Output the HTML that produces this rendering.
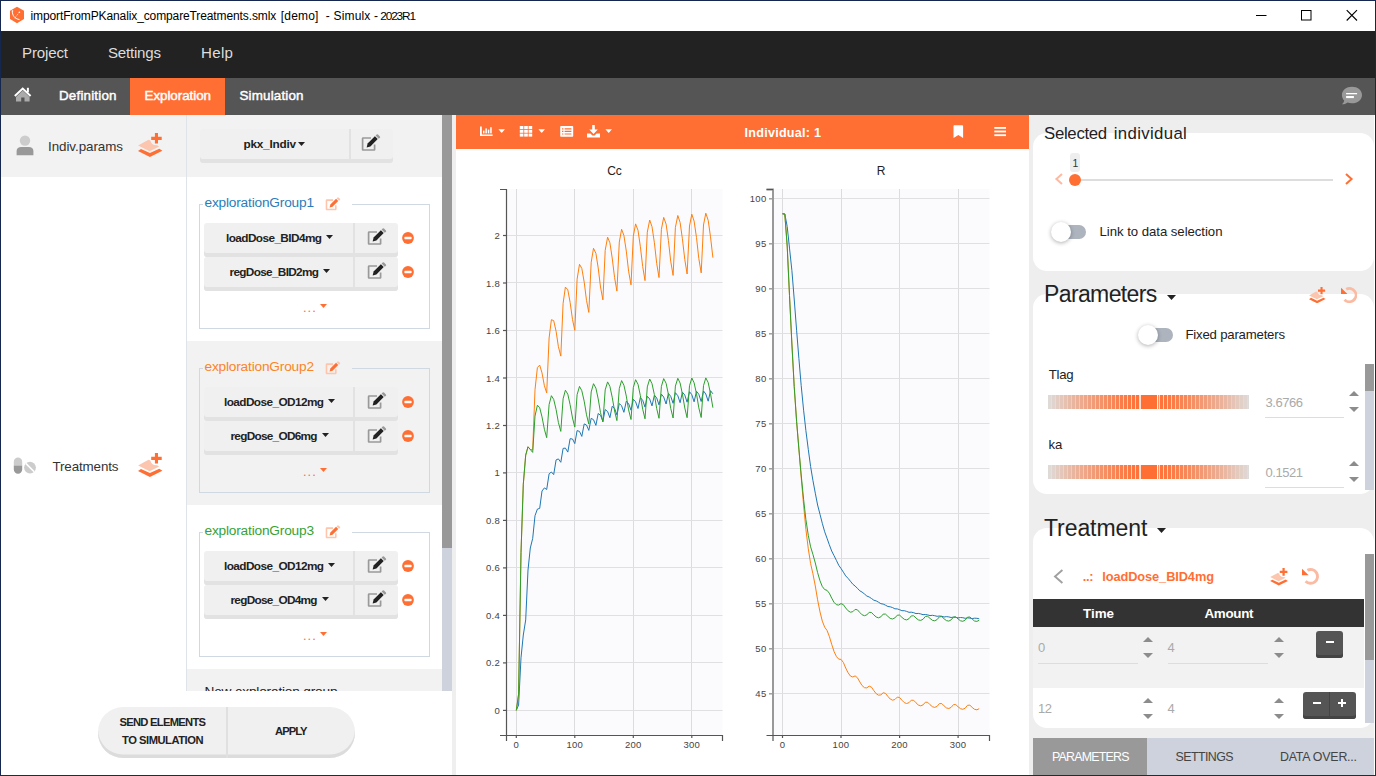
<!DOCTYPE html>
<html lang="en"><head><meta charset="utf-8"><title>Simulx</title>
<style>
html,body{margin:0;padding:0;background:#fff}
body{width:1376px;height:776px;overflow:hidden;position:relative;font-family:"Liberation Sans", sans-serif}
.a{position:absolute;display:block}
.t{position:absolute;white-space:nowrap;line-height:1;display:block}
.pb{display:inline-block;width:0;height:0}
.btn{background:#f0f0f0;border-radius:3px;box-shadow:inset 0 -4px 0 #e2e2e2}
.btn i{position:absolute;top:0;bottom:0;width:2px;background:#e2e2e2}
.pill{background:#f0f0f0;border-radius:25px;box-shadow:inset 0 -3.5px 0 #dcdcdc}
.pill i{position:absolute;top:0;bottom:0;width:2px;background:#e0e0e0}
  .fs{border:1px solid #d0d8e2;box-sizing:border-box}
.card{background:#fff;border-radius:14px}
.dbtn{background:#555;border-radius:3px;box-shadow:inset 0 -3px 0 #444}
.dbtn i{position:absolute;left:26px;top:0;bottom:0;width:1px;background:#444}
</style></head>
<body>
<div class="a" style="left:0px;top:0px;width:1376px;height:776px;background:#fff;"></div>
<div class="a" style="left:1px;top:1px;width:1374px;height:30px;background:#fff;"></div>
<svg class="a" style="left:9px;top:6px" width="16" height="18" viewBox="0 0 16 18">
<path d="M8 0.8 L15 4.8 V13 L8 17.2 L1 13 V4.8 Z" fill="#ff6f33"/>
<path d="M3.2 5.2 C3.6 9.5 5.2 12.6 10.6 13.6" fill="none" stroke="#fff" stroke-width="1"/>
<path d="M5.6 12.2 L10.2 6.4" fill="none" stroke="#fff" stroke-width="0.8" stroke-dasharray="1.2 1"/>
<circle cx="10.4" cy="6.2" r="0.8" fill="#fff"/><path d="M2.6 4.6 L4.2 4.2 L4 7 Z" fill="#fff"/>
</svg>
<span class="t" id="t0" style="left:30.5px;top:10.01px;font-size:12px;font-weight:400;color:#000;letter-spacing:-0.115px;">importFromPKanalix_compareTreatments.smlx</span>
<span class="t" id="t1" style="left:280.8px;top:10.01px;font-size:12px;font-weight:400;color:#000;letter-spacing:0.182px;">[demo]</span>
<span class="t" id="t2" style="left:325.8px;top:10.01px;font-size:12px;font-weight:400;color:#000;letter-spacing:0.170px;white-space:pre;">- Simulx -</span>
<span class="t" id="t3" style="left:380.3px;top:11.01px;font-size:11.8px;font-weight:400;color:#000;letter-spacing:-1.126px;">2023R1</span>
<svg class="a" style="left:1250px;top:5px" width="116" height="22" viewBox="0 0 116 22"><path d="M6 10.5 H16.5" stroke="#000" stroke-width="1"/><rect x="51.5" y="5.5" width="9.5" height="9.5" fill="none" stroke="#000" stroke-width="1"/><path d="M96.7 5.2 L107 15.5 M107 5.2 L96.7 15.5" stroke="#000" stroke-width="1.1"/></svg>
<div class="a" style="left:1px;top:31px;width:1374px;height:47px;background:#222;"></div>
<span class="t" id="t4" style="left:22px;top:45.00px;font-size:15.1px;font-weight:400;color:#ddd;letter-spacing:-0.164px;">Project</span>
<span class="t" id="t5" style="left:108px;top:45.00px;font-size:15.1px;font-weight:400;color:#ddd;letter-spacing:-0.221px;">Settings</span>
<span class="t" id="t6" style="left:201px;top:45.00px;font-size:15.1px;font-weight:400;color:#ddd;letter-spacing:0.318px;">Help</span>
<div class="a" style="left:1px;top:78px;width:1374px;height:37px;background:#555;"></div>
<div class="a" style="left:130px;top:78px;width:95px;height:37px;background:#ff6f33;"></div>
<svg class="a" style="left:14px;top:87px" width="18" height="16" viewBox="0 0 18 16">
<path d="M8.7 3.6 L15.6 9.9 V14.6 H10.5 V10.4 H7.2 V14.6 H2 V9.9 Z" fill="#aaa"/>
<rect x="12.9" y="0.8" width="2" height="4.6" fill="#fff"/>
<path d="M0.8 8.9 L8.7 1.6 L16.6 8.9" fill="none" stroke="#fff" stroke-width="2" stroke-linejoin="miter"/></svg>
<span class="t" id="t7" style="left:59px;top:89.00px;font-size:13.4px;font-weight:400;color:#fff;letter-spacing:0.186px;-webkit-text-stroke:0.45px #fff;">Definition</span>
<span class="t" id="t8" style="left:144.5px;top:89.00px;font-size:13.4px;font-weight:400;color:#fff;letter-spacing:-0.050px;-webkit-text-stroke:0.45px #fff;">Exploration</span>
<span class="t" id="t9" style="left:239.5px;top:89.00px;font-size:13.4px;font-weight:400;color:#fff;letter-spacing:0.163px;-webkit-text-stroke:0.45px #fff;">Simulation</span>
<svg class="a" style="left:1340px;top:86px" width="24" height="20" viewBox="0 0 24 20">
<path d="M12 0.8 C17.6 0.8 22 4.3 22 8.9 C22 13.6 17.6 17.2 12 17.2 C10.4 17.2 8.8 16.9 7.5 16.4 C6 17.6 4 18.3 2 18.3 C3.3 17.3 4 15.8 4.2 14.6 C2.8 13.1 1.9 11.1 1.9 8.9 C1.9 4.3 6.4 0.8 12 0.8 Z" fill="#999"/>
<rect x="6.1" y="7" width="11" height="1.3" fill="#fff"/><rect x="6.1" y="10" width="7.8" height="2.1" fill="#fff"/></svg>
<div class="a" style="left:1px;top:115px;width:441px;height:62px;background:#f2f2f2;"></div>
<div class="a" style="left:186px;top:115px;width:1px;height:576px;background:#dfe3ea;"></div>
<div class="a" style="left:187px;top:341px;width:255px;height:164px;background:#f2f2f2;"></div>
<div class="a" style="left:187px;top:669px;width:255px;height:22px;background:#f2f2f2;"></div>
<div class="a" style="left:442px;top:115px;width:10px;height:576px;background:#cdd2dc;"></div>
<div class="a" style="left:442px;top:115px;width:10px;height:433px;background:#999;"></div>
<div class="a" style="left:452px;top:115px;width:4px;height:660px;background:#efefef;"></div>
<svg class="a" style="left:16px;top:135px" width="18" height="21" viewBox="0 0 18 21"><circle cx="9" cy="5.6" r="5.2" fill="#ccc"/><path d="M0.6 20.2 V16 C0.6 13.4 2.6 12 5 12 H13 C15.4 12 17.4 13.4 17.4 16 V20.2 Z" fill="#999"/></svg>
<span class="t" id="t10" style="left:48px;top:139.80px;font-size:13.4px;font-weight:400;color:#333;letter-spacing:-0.061px;">Indiv.params</span>
<svg class="a" style="left:138px;top:133px" width="25" height="24" viewBox="0 0 25 24">
<path d="M0.1 12.5 L10.5 6.7 L12.4 7.5 C12.8 10.6 15.6 12.6 19 12.2 L21.2 13.5 L11.6 18.2 Z" fill="#fbc5ae"/>
<path d="M0 17.9 L3 16 L11.9 20.1 L21.3 15.8 L24.4 17.7 L11.9 24 Z" fill="#ff6f33"/>
<path d="M16.9 0.1 H20 V3.8 H23.7 V6.9 H20 V10.6 H16.9 V6.9 H13.2 V3.8 H16.9 Z" fill="#ff6f33"/>
</svg>
<svg class="a" style="left:13px;top:457px" width="24" height="18" viewBox="0 0 24 18">
<path d="M0.8 8.6 V4.8 A4.2 4.2 0 0 1 9.2 4.8 V8.6 Z" fill="#ccc"/><path d="M0.8 8.6 V12.6 A4.2 4.2 0 0 0 9.2 12.6 V8.6 Z" fill="#999"/>
<circle cx="17" cy="10.6" r="5.9" fill="#ccc"/><path d="M12.8 6.4 L21.2 14.8" stroke="#fff" stroke-width="1.6"/></svg>
<span class="t" id="t11" style="left:52.5px;top:459.80px;font-size:13.4px;font-weight:400;color:#333;letter-spacing:-0.137px;">Treatments</span>
<svg class="a" style="left:138px;top:453px" width="25" height="24" viewBox="0 0 25 24">
<path d="M0.1 12.5 L10.5 6.7 L12.4 7.5 C12.8 10.6 15.6 12.6 19 12.2 L21.2 13.5 L11.6 18.2 Z" fill="#fbc5ae"/>
<path d="M0 17.9 L3 16 L11.9 20.1 L21.3 15.8 L24.4 17.7 L11.9 24 Z" fill="#ff6f33"/>
<path d="M16.9 0.1 H20 V3.8 H23.7 V6.9 H20 V10.6 H16.9 V6.9 H13.2 V3.8 H16.9 Z" fill="#ff6f33"/>
</svg>
<div class="a btn" style="left:199.5px;top:129px;width:193px;height:34px"><i style="left:149.5px"></i></div>
<span class="t" id="t12" style="left:243.5px;top:139.01px;font-size:11.8px;font-weight:700;color:#222;letter-spacing:-0.240px;">pkx_Indiv</span>
<svg class="a" style="left:298px;top:142px" width="7" height="4" viewBox="0 0 7 4"><path d="M0 0 H7 L3.5 4 Z" fill="#222"/></svg>
<svg class="a" style="left:362px;top:134.00px;overflow:visible" width="19.00" height="17.00" viewBox="0 -1 19 17">
<path d="M9 3 H1.2 A0.6 0.6 0 0 0 0.6 3.6 V14.4 A0.6 0.6 0 0 0 1.2 15 H12 A0.6 0.6 0 0 0 12.6 14.4 V9.5" fill="none" stroke="#999" stroke-width="1.7" stroke-linejoin="round"/>
<path d="M4.6 12.4 L5.6 8.6 L12.9 1.3 L15.7 4.1 L8.4 11.4 Z" fill="#222"/>
<path d="M13.6 0.6 L14.7 -0.5 A0.9 0.9 0 0 1 16 -0.5 L17.9 1.4 A0.9 0.9 0 0 1 17.9 2.7 L16.8 3.8 Z" fill="#999"/>
</svg>
<div class="a fs" style="left:199px;top:204px;width:231px;height:125px"></div>
<div class="a" style="left:203px;top:200px;width:149px;height:10px;background:#fff;"></div>
<span class="t" id="t13" style="left:204.5px;top:195.51px;font-size:13.7px;font-weight:400;color:#2a7db9;letter-spacing:-0.195px;">explorationGroup1</span>
<svg class="a" style="left:326.2px;top:196.82px;overflow:visible" width="14.82" height="13.26" viewBox="0 -1 19 17">
<path d="M9 3 H1.2 A0.6 0.6 0 0 0 0.6 3.6 V14.4 A0.6 0.6 0 0 0 1.2 15 H12 A0.6 0.6 0 0 0 12.6 14.4 V9.5" fill="none" stroke="#ffc4aa" stroke-width="2" stroke-linejoin="round"/>
<path d="M4.6 12.4 L5.6 8.6 L12.9 1.3 L15.7 4.1 L8.4 11.4 Z" fill="#ff6f33"/>
<path d="M13.6 0.6 L14.7 -0.5 A0.9 0.9 0 0 1 16 -0.5 L17.9 1.4 A0.9 0.9 0 0 1 17.9 2.7 L16.8 3.8 Z" fill="#ffc4aa"/>
</svg>
<div class="a btn" style="left:204px;top:223px;width:194px;height:34px"><i style="left:149px"></i></div>
<span class="t" id="t14" style="left:226px;top:232.91px;font-size:11.8px;font-weight:700;color:#222;letter-spacing:-0.588px;">loadDose_BID4mg</span>
<svg class="a" style="left:326px;top:235px" width="7" height="4" viewBox="0 0 7 4"><path d="M0 0 H7 L3.5 4 Z" fill="#222"/></svg>
<svg class="a" style="left:367.6px;top:228.10px;overflow:visible" width="19.00" height="17.00" viewBox="0 -1 19 17">
<path d="M9 3 H1.2 A0.6 0.6 0 0 0 0.6 3.6 V14.4 A0.6 0.6 0 0 0 1.2 15 H12 A0.6 0.6 0 0 0 12.6 14.4 V9.5" fill="none" stroke="#999" stroke-width="1.7" stroke-linejoin="round"/>
<path d="M4.6 12.4 L5.6 8.6 L12.9 1.3 L15.7 4.1 L8.4 11.4 Z" fill="#222"/>
<path d="M13.6 0.6 L14.7 -0.5 A0.9 0.9 0 0 1 16 -0.5 L17.9 1.4 A0.9 0.9 0 0 1 17.9 2.7 L16.8 3.8 Z" fill="#999"/>
</svg>
<svg class="a" style="left:402.2px;top:231.6px" width="12" height="12" viewBox="0 0 12 12"><circle cx="6" cy="6" r="5.9" fill="#ff6f33"/><rect x="2.4" y="4.8" width="7.2" height="2.4" rx="0.6" fill="#fff"/></svg>
<div class="a btn" style="left:204px;top:257px;width:194px;height:34px"><i style="left:149px"></i></div>
<span class="t" id="t15" style="left:229.5px;top:266.91px;font-size:11.8px;font-weight:700;color:#222;letter-spacing:-0.680px;">regDose_BID2mg</span>
<svg class="a" style="left:323px;top:269px" width="7" height="4" viewBox="0 0 7 4"><path d="M0 0 H7 L3.5 4 Z" fill="#222"/></svg>
<svg class="a" style="left:367.6px;top:262.10px;overflow:visible" width="19.00" height="17.00" viewBox="0 -1 19 17">
<path d="M9 3 H1.2 A0.6 0.6 0 0 0 0.6 3.6 V14.4 A0.6 0.6 0 0 0 1.2 15 H12 A0.6 0.6 0 0 0 12.6 14.4 V9.5" fill="none" stroke="#999" stroke-width="1.7" stroke-linejoin="round"/>
<path d="M4.6 12.4 L5.6 8.6 L12.9 1.3 L15.7 4.1 L8.4 11.4 Z" fill="#222"/>
<path d="M13.6 0.6 L14.7 -0.5 A0.9 0.9 0 0 1 16 -0.5 L17.9 1.4 A0.9 0.9 0 0 1 17.9 2.7 L16.8 3.8 Z" fill="#999"/>
</svg>
<svg class="a" style="left:402.2px;top:265.6px" width="12" height="12" viewBox="0 0 12 12"><circle cx="6" cy="6" r="5.9" fill="#ff6f33"/><rect x="2.4" y="4.8" width="7.2" height="2.4" rx="0.6" fill="#fff"/></svg>
<span class="t" id="t16" style="left:303px;top:301.00px;font-size:13px;font-weight:400;color:#ff6f33;letter-spacing:1px;">...</span>
<svg class="a" style="left:320px;top:304px" width="7" height="4" viewBox="0 0 7 4"><path d="M0 0 H7 L3.5 4 Z" fill="#ff6f33"/></svg>
<div class="a fs" style="left:199px;top:368px;width:231px;height:125px"></div>
<div class="a" style="left:203px;top:364px;width:149px;height:10px;background:#f2f2f2;"></div>
<span class="t" id="t17" style="left:204.5px;top:359.51px;font-size:13.7px;font-weight:400;color:#fb8427;letter-spacing:-0.195px;">explorationGroup2</span>
<svg class="a" style="left:326.2px;top:360.82px;overflow:visible" width="14.82" height="13.26" viewBox="0 -1 19 17">
<path d="M9 3 H1.2 A0.6 0.6 0 0 0 0.6 3.6 V14.4 A0.6 0.6 0 0 0 1.2 15 H12 A0.6 0.6 0 0 0 12.6 14.4 V9.5" fill="none" stroke="#ffc4aa" stroke-width="2" stroke-linejoin="round"/>
<path d="M4.6 12.4 L5.6 8.6 L12.9 1.3 L15.7 4.1 L8.4 11.4 Z" fill="#ff6f33"/>
<path d="M13.6 0.6 L14.7 -0.5 A0.9 0.9 0 0 1 16 -0.5 L17.9 1.4 A0.9 0.9 0 0 1 17.9 2.7 L16.8 3.8 Z" fill="#ffc4aa"/>
</svg>
<div class="a btn" style="left:204px;top:387px;width:194px;height:34px"><i style="left:149px"></i></div>
<span class="t" id="t18" style="left:224px;top:396.91px;font-size:11.8px;font-weight:700;color:#222;letter-spacing:-0.584px;">loadDose_OD12mg</span>
<svg class="a" style="left:328px;top:399px" width="7" height="4" viewBox="0 0 7 4"><path d="M0 0 H7 L3.5 4 Z" fill="#222"/></svg>
<svg class="a" style="left:367.6px;top:392.10px;overflow:visible" width="19.00" height="17.00" viewBox="0 -1 19 17">
<path d="M9 3 H1.2 A0.6 0.6 0 0 0 0.6 3.6 V14.4 A0.6 0.6 0 0 0 1.2 15 H12 A0.6 0.6 0 0 0 12.6 14.4 V9.5" fill="none" stroke="#999" stroke-width="1.7" stroke-linejoin="round"/>
<path d="M4.6 12.4 L5.6 8.6 L12.9 1.3 L15.7 4.1 L8.4 11.4 Z" fill="#222"/>
<path d="M13.6 0.6 L14.7 -0.5 A0.9 0.9 0 0 1 16 -0.5 L17.9 1.4 A0.9 0.9 0 0 1 17.9 2.7 L16.8 3.8 Z" fill="#999"/>
</svg>
<svg class="a" style="left:402.2px;top:395.6px" width="12" height="12" viewBox="0 0 12 12"><circle cx="6" cy="6" r="5.9" fill="#ff6f33"/><rect x="2.4" y="4.8" width="7.2" height="2.4" rx="0.6" fill="#fff"/></svg>
<div class="a btn" style="left:204px;top:421px;width:194px;height:34px"><i style="left:149px"></i></div>
<span class="t" id="t19" style="left:230.5px;top:430.91px;font-size:11.8px;font-weight:700;color:#222;letter-spacing:-0.727px;">regDose_OD6mg</span>
<svg class="a" style="left:321.5px;top:433px" width="7" height="4" viewBox="0 0 7 4"><path d="M0 0 H7 L3.5 4 Z" fill="#222"/></svg>
<svg class="a" style="left:367.6px;top:426.10px;overflow:visible" width="19.00" height="17.00" viewBox="0 -1 19 17">
<path d="M9 3 H1.2 A0.6 0.6 0 0 0 0.6 3.6 V14.4 A0.6 0.6 0 0 0 1.2 15 H12 A0.6 0.6 0 0 0 12.6 14.4 V9.5" fill="none" stroke="#999" stroke-width="1.7" stroke-linejoin="round"/>
<path d="M4.6 12.4 L5.6 8.6 L12.9 1.3 L15.7 4.1 L8.4 11.4 Z" fill="#222"/>
<path d="M13.6 0.6 L14.7 -0.5 A0.9 0.9 0 0 1 16 -0.5 L17.9 1.4 A0.9 0.9 0 0 1 17.9 2.7 L16.8 3.8 Z" fill="#999"/>
</svg>
<svg class="a" style="left:402.2px;top:429.6px" width="12" height="12" viewBox="0 0 12 12"><circle cx="6" cy="6" r="5.9" fill="#ff6f33"/><rect x="2.4" y="4.8" width="7.2" height="2.4" rx="0.6" fill="#fff"/></svg>
<span class="t" id="t20" style="left:303px;top:465.00px;font-size:13px;font-weight:400;color:#ff6f33;letter-spacing:1px;">...</span>
<svg class="a" style="left:320px;top:468px" width="7" height="4" viewBox="0 0 7 4"><path d="M0 0 H7 L3.5 4 Z" fill="#ff6f33"/></svg>
<div class="a fs" style="left:199px;top:532px;width:231px;height:125px"></div>
<div class="a" style="left:203px;top:528px;width:149px;height:10px;background:#fff;"></div>
<span class="t" id="t21" style="left:204.5px;top:523.51px;font-size:13.7px;font-weight:400;color:#36a236;letter-spacing:-0.195px;">explorationGroup3</span>
<svg class="a" style="left:326.2px;top:524.82px;overflow:visible" width="14.82" height="13.26" viewBox="0 -1 19 17">
<path d="M9 3 H1.2 A0.6 0.6 0 0 0 0.6 3.6 V14.4 A0.6 0.6 0 0 0 1.2 15 H12 A0.6 0.6 0 0 0 12.6 14.4 V9.5" fill="none" stroke="#ffc4aa" stroke-width="2" stroke-linejoin="round"/>
<path d="M4.6 12.4 L5.6 8.6 L12.9 1.3 L15.7 4.1 L8.4 11.4 Z" fill="#ff6f33"/>
<path d="M13.6 0.6 L14.7 -0.5 A0.9 0.9 0 0 1 16 -0.5 L17.9 1.4 A0.9 0.9 0 0 1 17.9 2.7 L16.8 3.8 Z" fill="#ffc4aa"/>
</svg>
<div class="a btn" style="left:204px;top:551px;width:194px;height:34px"><i style="left:149px"></i></div>
<span class="t" id="t22" style="left:224px;top:560.91px;font-size:11.8px;font-weight:700;color:#222;letter-spacing:-0.584px;">loadDose_OD12mg</span>
<svg class="a" style="left:328px;top:563px" width="7" height="4" viewBox="0 0 7 4"><path d="M0 0 H7 L3.5 4 Z" fill="#222"/></svg>
<svg class="a" style="left:367.6px;top:556.10px;overflow:visible" width="19.00" height="17.00" viewBox="0 -1 19 17">
<path d="M9 3 H1.2 A0.6 0.6 0 0 0 0.6 3.6 V14.4 A0.6 0.6 0 0 0 1.2 15 H12 A0.6 0.6 0 0 0 12.6 14.4 V9.5" fill="none" stroke="#999" stroke-width="1.7" stroke-linejoin="round"/>
<path d="M4.6 12.4 L5.6 8.6 L12.9 1.3 L15.7 4.1 L8.4 11.4 Z" fill="#222"/>
<path d="M13.6 0.6 L14.7 -0.5 A0.9 0.9 0 0 1 16 -0.5 L17.9 1.4 A0.9 0.9 0 0 1 17.9 2.7 L16.8 3.8 Z" fill="#999"/>
</svg>
<svg class="a" style="left:402.2px;top:559.6px" width="12" height="12" viewBox="0 0 12 12"><circle cx="6" cy="6" r="5.9" fill="#ff6f33"/><rect x="2.4" y="4.8" width="7.2" height="2.4" rx="0.6" fill="#fff"/></svg>
<div class="a btn" style="left:204px;top:585px;width:194px;height:34px"><i style="left:149px"></i></div>
<span class="t" id="t23" style="left:230.5px;top:594.91px;font-size:11.8px;font-weight:700;color:#222;letter-spacing:-0.727px;">regDose_OD4mg</span>
<svg class="a" style="left:321.5px;top:597px" width="7" height="4" viewBox="0 0 7 4"><path d="M0 0 H7 L3.5 4 Z" fill="#222"/></svg>
<svg class="a" style="left:367.6px;top:590.10px;overflow:visible" width="19.00" height="17.00" viewBox="0 -1 19 17">
<path d="M9 3 H1.2 A0.6 0.6 0 0 0 0.6 3.6 V14.4 A0.6 0.6 0 0 0 1.2 15 H12 A0.6 0.6 0 0 0 12.6 14.4 V9.5" fill="none" stroke="#999" stroke-width="1.7" stroke-linejoin="round"/>
<path d="M4.6 12.4 L5.6 8.6 L12.9 1.3 L15.7 4.1 L8.4 11.4 Z" fill="#222"/>
<path d="M13.6 0.6 L14.7 -0.5 A0.9 0.9 0 0 1 16 -0.5 L17.9 1.4 A0.9 0.9 0 0 1 17.9 2.7 L16.8 3.8 Z" fill="#999"/>
</svg>
<svg class="a" style="left:402.2px;top:593.6px" width="12" height="12" viewBox="0 0 12 12"><circle cx="6" cy="6" r="5.9" fill="#ff6f33"/><rect x="2.4" y="4.8" width="7.2" height="2.4" rx="0.6" fill="#fff"/></svg>
<span class="t" id="t24" style="left:303px;top:629.00px;font-size:13px;font-weight:400;color:#ff6f33;letter-spacing:1px;">...</span>
<svg class="a" style="left:320px;top:632px" width="7" height="4" viewBox="0 0 7 4"><path d="M0 0 H7 L3.5 4 Z" fill="#ff6f33"/></svg>
<div class="a" style="left:187px;top:669px;width:255px;height:21px;overflow:hidden"></div>
<div class="a" style="left:0;top:0;width:442px;height:691px;overflow:hidden"><span class="t" id="t25" style="left:204.5px;top:685.01px;font-size:13.7px;font-weight:400;color:#222;letter-spacing:-0.198px;">New exploration group</span></div>
<div class="a pill" style="left:98px;top:707.2px;width:257px;height:51px"><i style="left:128px"></i></div>
<span class="t" id="t26" style="left:119.5px;top:717.41px;font-size:11.2px;font-weight:700;color:#222;letter-spacing:-0.717px;">SEND ELEMENTS</span>
<span class="t" id="t27" style="left:122px;top:735.31px;font-size:11.2px;font-weight:700;color:#222;letter-spacing:-0.477px;">TO SIMULATION</span>
<span class="t" id="t28" style="left:275px;top:726.00px;font-size:11.2px;font-weight:700;color:#222;letter-spacing:-0.945px;">APPLY</span>
<div class="a" style="left:456px;top:115px;width:573px;height:34px;background:#ff6f33;"></div>
<svg class="a" style="left:456px;top:115px" width="573" height="34" viewBox="0 0 573 34">
<g fill="#fff">
<path d="M24 11.5 H25.8 V19.4 H36.6 V21 H24 Z"/><rect x="27" y="15.6" width="1.5" height="2.8"/><rect x="29.4" y="13.4" width="1.5" height="5"/><rect x="31.8" y="14.6" width="1.5" height="3.8"/><rect x="34.2" y="12.2" width="1.5" height="6.2"/>
<path d="M42.4 14.2 H49 L45.7 18 Z"/>
<g><rect x="63.8" y="11" width="3.6" height="3"/><rect x="68.2" y="11" width="3.6" height="3"/><rect x="72.6" y="11" width="3.6" height="3"/>
<rect x="63.8" y="14.8" width="3.6" height="3"/><rect x="68.2" y="14.8" width="3.6" height="3"/><rect x="72.6" y="14.8" width="3.6" height="3"/>
<rect x="63.8" y="18.6" width="3.6" height="3"/><rect x="68.2" y="18.6" width="3.6" height="3"/><rect x="72.6" y="18.6" width="3.6" height="3"/></g>
<path d="M82.4 14.2 H89 L85.7 18 Z"/>
<path d="M105 11 H116.4 A0.8 0.8 0 0 1 117.2 11.8 V21 A0.8 0.8 0 0 1 116.4 21.8 H105 A0.8 0.8 0 0 1 104.2 21 V11.8 A0.8 0.8 0 0 1 105 11 Z M106 13.2 V14.4 H107.4 V13.2 Z M108.6 13.2 V14.4 H115.4 V13.2 Z M106 15.8 V17 H107.4 V15.8 Z M108.6 15.8 V17 H115.4 V15.8 Z M106 18.4 V19.6 H107.4 V18.4 Z M108.6 18.4 V19.6 H115.4 V18.4 Z" fill-rule="evenodd"/>
<path d="M136.2 10 H138.8 V14.6 H141.8 L137.5 19 L133.2 14.6 H136.2 Z"/><path d="M131 18.6 H134.4 L136.4 20.6 H138.6 L140.6 18.6 H144 V22.6 H131 Z"/>
<path d="M149.4 14.2 H156 L152.7 18 Z"/>
<path d="M498.4 10.2 H506.2 A0.9 0.9 0 0 1 507.1 11.1 V22.9 L502.4 19.9 L497.5 22.9 V11.1 A0.9 0.9 0 0 1 498.4 10.2 Z"/>
<rect x="538.3" y="12" width="11.7" height="1.8"/><rect x="538.3" y="15.6" width="11.7" height="1.8"/><rect x="538.3" y="19.3" width="11.7" height="1.8"/>
</g></svg>
<span class="t" id="t29" style="left:744.5px;top:127.01px;font-size:12.6px;font-weight:700;color:#fff;letter-spacing:0.251px;">Individual: 1</span>
<svg class="a" style="left:456px;top:149px" width="573" height="627" viewBox="456 149 573 627" font-family='"Liberation Sans", sans-serif' font-size="9.5" letter-spacing="0.3" fill="#444">
<rect x="507" y="189" width="215.5" height="546" fill="#fbfbfd"/>
<path d="M516.5 189 V735" stroke="#dcdcdf" stroke-width="1"/>
<path d="M574.5 189 V735" stroke="#dcdcdf" stroke-width="1"/>
<path d="M633.5 189 V735" stroke="#dcdcdf" stroke-width="1"/>
<path d="M691.5 189 V735" stroke="#dcdcdf" stroke-width="1"/>
<path d="M507 710.5 H722.5" stroke="#e0e0e3" stroke-width="1"/>
<path d="M507 662.5 H722.5" stroke="#e0e0e3" stroke-width="1"/>
<path d="M507 615.5 H722.5" stroke="#e0e0e3" stroke-width="1"/>
<path d="M507 567.5 H722.5" stroke="#e0e0e3" stroke-width="1"/>
<path d="M507 520.5 H722.5" stroke="#e0e0e3" stroke-width="1"/>
<path d="M507 472.5 H722.5" stroke="#e0e0e3" stroke-width="1"/>
<path d="M507 425.5 H722.5" stroke="#e0e0e3" stroke-width="1"/>
<path d="M507 377.5 H722.5" stroke="#e0e0e3" stroke-width="1"/>
<path d="M507 330.5 H722.5" stroke="#e0e0e3" stroke-width="1"/>
<path d="M507 282.5 H722.5" stroke="#e0e0e3" stroke-width="1"/>
<path d="M507 235.5 H722.5" stroke="#e0e0e3" stroke-width="1"/>
<rect x="773.5" y="189" width="216.0" height="546" fill="#fbfbfd"/>
<path d="M782.5 189 V735" stroke="#dcdcdf" stroke-width="1"/>
<path d="M841.5 189 V735" stroke="#dcdcdf" stroke-width="1"/>
<path d="M899.5 189 V735" stroke="#dcdcdf" stroke-width="1"/>
<path d="M958.5 189 V735" stroke="#dcdcdf" stroke-width="1"/>
<path d="M773.5 693.5 H989.5" stroke="#e0e0e3" stroke-width="1"/>
<path d="M773.5 648.5 H989.5" stroke="#e0e0e3" stroke-width="1"/>
<path d="M773.5 603.5 H989.5" stroke="#e0e0e3" stroke-width="1"/>
<path d="M773.5 558.5 H989.5" stroke="#e0e0e3" stroke-width="1"/>
<path d="M773.5 513.5 H989.5" stroke="#e0e0e3" stroke-width="1"/>
<path d="M773.5 468.5 H989.5" stroke="#e0e0e3" stroke-width="1"/>
<path d="M773.5 423.5 H989.5" stroke="#e0e0e3" stroke-width="1"/>
<path d="M773.5 378.5 H989.5" stroke="#e0e0e3" stroke-width="1"/>
<path d="M773.5 333.5 H989.5" stroke="#e0e0e3" stroke-width="1"/>
<path d="M773.5 288.5 H989.5" stroke="#e0e0e3" stroke-width="1"/>
<path d="M773.5 243.5 H989.5" stroke="#e0e0e3" stroke-width="1"/>
<path d="M773.5 198.5 H989.5" stroke="#e0e0e3" stroke-width="1"/>
<path d="M516.3 710.4 L518.6 705.0 L521.0 657.8 L523.3 635.0 L525.7 619.9 L528.0 570.0 L530.3 548.0 L532.7 538.4 L535.0 515.7 L537.4 509.1 L539.7 508.4 L542.0 491.0 L544.4 487.9 L546.7 489.5 L549.1 473.8 L551.4 472.0 L553.7 474.6 L556.1 459.9 L558.4 458.9 L560.8 462.3 L563.1 448.4 L565.4 448.1 L567.8 452.1 L570.1 438.7 L572.5 439.0 L574.8 443.6 L577.1 430.6 L579.5 431.4 L581.8 436.4 L584.2 423.9 L586.5 425.0 L588.8 430.4 L591.2 418.3 L593.5 419.7 L595.9 425.4 L598.2 413.5 L600.5 415.3 L602.9 421.2 L605.2 409.6 L607.6 411.5 L609.9 417.7 L612.2 406.3 L614.6 408.4 L616.9 414.8 L619.3 403.5 L621.6 405.8 L623.9 412.3 L626.3 401.2 L628.6 403.6 L631.0 410.2 L633.3 399.3 L635.6 401.8 L638.0 408.5 L640.3 397.6 L642.7 400.3 L645.0 407.1 L647.3 396.3 L649.7 399.0 L652.0 405.9 L654.4 395.1 L656.7 397.9 L659.0 404.9 L661.4 394.2 L663.7 397.0 L666.1 404.0 L668.4 393.4 L670.7 396.3 L673.1 403.3 L675.4 392.7 L677.8 395.7 L680.1 402.7 L682.4 392.2 L684.8 395.1 L687.1 402.2 L689.5 391.7 L691.8 394.7 L694.1 401.8 L696.5 391.3 L698.8 394.3 L701.2 401.5 L703.5 391.0 L705.8 394.0 L708.2 401.2 L710.5 390.7 L712.9 393.8" fill="none" stroke="#1f77b4" stroke-width="1" stroke-linejoin="round"/>
<path d="M516.3 710.4 L518.6 694.2 L521.0 552.6 L523.3 484.2 L525.7 455.1 L528.0 446.8 L530.3 449.5 L532.7 449.7 L535.0 389.8 L537.4 367.5 L539.7 365.1 L542.0 372.9 L544.4 385.8 L546.7 392.9 L549.1 338.0 L551.4 319.7 L553.7 320.6 L556.1 331.3 L558.4 346.7 L560.8 356.1 L563.1 303.4 L565.4 287.1 L567.8 289.8 L570.1 302.3 L572.5 319.5 L574.8 330.4 L577.1 279.2 L579.5 264.3 L581.8 268.4 L584.2 282.1 L586.5 300.4 L588.8 312.4 L591.2 262.3 L593.5 248.3 L595.9 253.3 L598.2 267.9 L600.5 287.0 L602.9 299.9 L605.2 250.4 L607.6 237.2 L609.9 242.8 L612.2 258.0 L614.6 277.7 L616.9 291.1 L619.3 242.1 L621.6 229.3 L623.9 235.4 L626.3 251.1 L628.6 271.2 L631.0 284.9 L633.3 236.3 L635.6 223.9 L638.0 230.3 L640.3 246.2 L642.7 266.6 L645.0 280.6 L647.3 232.2 L649.7 220.0 L652.0 226.7 L654.4 242.8 L656.7 263.4 L659.0 277.6 L661.4 229.4 L663.7 217.4 L666.1 224.1 L668.4 240.4 L670.7 261.1 L673.1 275.4 L675.4 227.4 L677.8 215.5 L680.1 222.4 L682.4 238.8 L684.8 259.6 L687.1 274.0 L689.5 226.0 L691.8 214.2 L694.1 221.1 L696.5 237.6 L698.8 258.5 L701.2 272.9 L703.5 225.0 L705.8 213.2 L708.2 220.3 L710.5 236.8 L712.9 257.7" fill="none" stroke="#ff7f0e" stroke-width="1" stroke-linejoin="round"/>
<path d="M516.3 710.4 L518.6 694.2 L521.0 552.6 L523.3 484.2 L525.7 455.1 L528.0 446.8 L530.3 449.5 L532.7 452.4 L535.0 416.1 L537.4 405.2 L539.7 407.7 L542.0 416.9 L544.4 429.3 L546.7 437.7 L549.1 404.6 L551.4 395.7 L553.7 399.4 L556.1 409.5 L558.4 422.5 L560.8 431.4 L563.1 398.8 L565.4 390.2 L567.8 394.2 L570.1 404.6 L572.5 418.0 L574.8 427.1 L577.1 394.7 L579.5 386.4 L581.8 390.7 L584.2 401.2 L586.5 414.8 L588.8 424.1 L591.2 391.9 L593.5 383.7 L595.9 388.1 L598.2 398.9 L600.5 412.6 L602.9 422.0 L605.2 389.9 L607.6 381.9 L609.9 386.4 L612.2 397.2 L614.6 411.0 L616.9 420.6 L619.3 388.5 L621.6 380.6 L623.9 385.2 L626.3 396.1 L628.6 409.9 L631.0 419.5 L633.3 387.6 L635.6 379.7 L638.0 384.3 L640.3 395.3 L642.7 409.2 L645.0 418.8 L647.3 386.9 L649.7 379.0 L652.0 383.7 L654.4 394.7 L656.7 408.6 L659.0 418.3 L661.4 386.4 L663.7 378.6 L666.1 383.3 L668.4 394.3 L670.7 408.3 L673.1 418.0 L675.4 386.1 L677.8 378.3 L680.1 383.0 L682.4 394.0 L684.8 408.0 L687.1 417.7 L689.5 385.8 L691.8 378.0 L694.1 382.8 L696.5 393.8 L698.8 407.8 L701.2 417.5 L703.5 385.7 L705.8 377.9 L708.2 382.6 L710.5 393.7 L712.9 407.7" fill="none" stroke="#2ca02c" stroke-width="1" stroke-linejoin="round"/>
<path d="M782.5 213.8 L784.8 213.9 L787.2 226.5 L789.5 248.1 L791.9 270.6 L794.2 299.0 L796.6 330.2 L798.9 358.6 L801.2 385.6 L803.6 410.2 L805.9 430.7 L808.3 449.5 L810.6 466.5 L812.9 480.3 L815.3 493.2 L817.6 505.0 L820.0 514.3 L822.3 523.3 L824.7 531.8 L827.0 538.2 L829.3 544.7 L831.7 551.0 L834.0 555.6 L836.4 560.4 L838.7 565.2 L841.0 568.5 L843.4 572.2 L845.7 575.9 L848.1 578.4 L850.4 581.2 L852.8 584.2 L855.1 586.0 L857.4 588.3 L859.8 590.8 L862.1 592.1 L864.5 594.0 L866.8 596.0 L869.2 597.0 L871.5 598.5 L873.8 600.2 L876.2 600.9 L878.5 602.2 L880.9 603.7 L883.2 604.1 L885.5 605.2 L887.9 606.5 L890.2 606.8 L892.6 607.6 L894.9 608.8 L897.3 608.9 L899.6 609.7 L901.9 610.7 L904.3 610.7 L906.6 611.4 L909.0 612.3 L911.3 612.2 L913.7 612.7 L916.0 613.6 L918.3 613.4 L920.7 613.9 L923.0 614.7 L925.4 614.5 L927.7 614.9 L930.0 615.6 L932.4 615.3 L934.7 615.7 L937.1 616.3 L939.4 616.0 L941.8 616.3 L944.1 617.0 L946.4 616.6 L948.8 616.9 L951.1 617.5 L953.5 617.1 L955.8 617.4 L958.1 617.9 L960.5 617.5 L962.8 617.7 L965.2 618.3 L967.5 617.9 L969.9 618.1 L972.2 618.6 L974.5 618.2 L976.9 618.3 L979.2 618.8" fill="none" stroke="#1f77b4" stroke-width="1" stroke-linejoin="round"/>
<path d="M782.5 213.8 L784.8 214.1 L787.2 246.0 L789.5 295.5 L791.9 344.0 L794.2 386.3 L796.6 421.3 L798.9 449.1 L801.2 477.2 L803.6 505.2 L805.9 529.4 L808.3 548.9 L810.6 563.5 L812.9 573.7 L815.3 586.0 L817.6 599.8 L820.0 611.9 L822.3 621.1 L824.7 627.2 L827.0 630.4 L829.3 636.3 L831.7 644.3 L834.0 651.4 L836.4 656.5 L838.7 659.1 L841.0 659.4 L843.4 662.5 L845.7 668.0 L848.1 672.8 L850.4 676.0 L852.8 677.0 L855.1 675.9 L857.4 677.7 L859.8 681.9 L862.1 685.6 L864.5 687.7 L866.8 687.9 L869.2 686.1 L871.5 687.2 L873.8 690.6 L876.2 693.7 L878.5 695.2 L880.9 694.9 L883.2 692.7 L885.5 693.4 L887.9 696.4 L890.2 699.0 L892.6 700.2 L894.9 699.5 L897.3 697.1 L899.6 697.5 L901.9 700.2 L904.3 702.6 L906.6 703.5 L909.0 702.7 L911.3 700.2 L913.7 700.3 L916.0 702.8 L918.3 705.0 L920.7 705.8 L923.0 704.9 L925.4 702.2 L927.7 702.3 L930.0 704.7 L932.4 706.7 L934.7 707.4 L937.1 706.4 L939.4 703.6 L941.8 703.6 L944.1 705.9 L946.4 707.9 L948.8 708.5 L951.1 707.4 L953.5 704.6 L955.8 704.6 L958.1 706.8 L960.5 708.7 L962.8 709.3 L965.2 708.2 L967.5 705.3 L969.9 705.2 L972.2 707.4 L974.5 709.3 L976.9 709.8 L979.2 708.7" fill="none" stroke="#ff7f0e" stroke-width="1" stroke-linejoin="round"/>
<path d="M782.5 213.8 L784.8 214.1 L787.2 246.0 L789.5 295.5 L791.9 344.0 L794.2 386.3 L796.6 421.3 L798.9 449.1 L801.2 475.0 L803.6 499.3 L805.9 519.6 L808.3 535.4 L810.6 546.8 L812.9 554.3 L815.3 563.0 L817.6 572.6 L820.0 580.8 L822.3 586.5 L824.7 589.6 L827.0 590.3 L829.3 593.2 L831.7 598.1 L834.0 602.3 L836.4 604.7 L838.7 605.1 L841.0 603.6 L843.4 604.7 L845.7 608.0 L848.1 610.8 L850.4 612.2 L852.8 611.7 L855.1 609.4 L857.4 609.8 L859.8 612.5 L862.1 614.8 L864.5 615.7 L866.8 614.9 L869.2 612.3 L871.5 612.5 L873.8 614.9 L876.2 617.0 L878.5 617.8 L880.9 616.8 L883.2 614.1 L885.5 614.1 L887.9 616.4 L890.2 618.4 L892.6 619.0 L894.9 617.9 L897.3 615.2 L899.6 615.1 L901.9 617.3 L904.3 619.3 L906.6 619.9 L909.0 618.7 L911.3 615.9 L913.7 615.8 L916.0 618.0 L918.3 619.9 L920.7 620.4 L923.0 619.3 L925.4 616.4 L927.7 616.3 L930.0 618.4 L932.4 620.3 L934.7 620.8 L937.1 619.6 L939.4 616.8 L941.8 616.6 L944.1 618.8 L946.4 620.6 L948.8 621.1 L951.1 619.9 L953.5 617.0 L955.8 616.8 L958.1 619.0 L960.5 620.8 L962.8 621.3 L965.2 620.1 L967.5 617.2 L969.9 617.0 L972.2 619.1 L974.5 621.0 L976.9 621.4 L979.2 620.2" fill="none" stroke="#2ca02c" stroke-width="1" stroke-linejoin="round"/>
<path d="M500 189.5 H506.5 V741 M500 735.5 H722.5 V741" fill="none" stroke="#555" stroke-width="1.2"/>
<path d="M516.3 735 V738" stroke="#555" stroke-width="1.2"/>
<text x="516.3" y="748" text-anchor="middle">0</text>
<path d="M574.8 735 V738" stroke="#555" stroke-width="1.2"/>
<text x="574.8" y="748" text-anchor="middle">100</text>
<path d="M633.3 735 V738" stroke="#555" stroke-width="1.2"/>
<text x="633.3" y="748" text-anchor="middle">200</text>
<path d="M691.8 735 V738" stroke="#555" stroke-width="1.2"/>
<text x="691.8" y="748" text-anchor="middle">300</text>
<path d="M503 710.4 H506.5" stroke="#555" stroke-width="1.2"/>
<text x="500" y="713.9" text-anchor="end">0</text>
<path d="M503 662.9 H506.5" stroke="#555" stroke-width="1.2"/>
<text x="500" y="666.4" text-anchor="end">0.2</text>
<path d="M503 615.4 H506.5" stroke="#555" stroke-width="1.2"/>
<text x="500" y="618.9" text-anchor="end">0.4</text>
<path d="M503 567.9 H506.5" stroke="#555" stroke-width="1.2"/>
<text x="500" y="571.4" text-anchor="end">0.6</text>
<path d="M503 520.4 H506.5" stroke="#555" stroke-width="1.2"/>
<text x="500" y="523.9" text-anchor="end">0.8</text>
<path d="M503 472.9 H506.5" stroke="#555" stroke-width="1.2"/>
<text x="500" y="476.4" text-anchor="end">1</text>
<path d="M503 425.5 H506.5" stroke="#555" stroke-width="1.2"/>
<text x="500" y="429.0" text-anchor="end">1.2</text>
<path d="M503 378.0 H506.5" stroke="#555" stroke-width="1.2"/>
<text x="500" y="381.5" text-anchor="end">1.4</text>
<path d="M503 330.5 H506.5" stroke="#555" stroke-width="1.2"/>
<text x="500" y="334.0" text-anchor="end">1.6</text>
<path d="M503 283.0 H506.5" stroke="#555" stroke-width="1.2"/>
<text x="500" y="286.5" text-anchor="end">1.8</text>
<path d="M503 235.5 H506.5" stroke="#555" stroke-width="1.2"/>
<text x="500" y="239.0" text-anchor="end">2</text>
<path d="M766.5 189.5 H773 V741" fill="none" stroke="#999" stroke-width="2"/>
<path d="M766.5 189.5 H773" fill="none" stroke="#555" stroke-width="1.2"/>
<path d="M766.5 735.5 H989.5 V741" fill="none" stroke="#555" stroke-width="1.2"/>
<path d="M782.5 735 V738" stroke="#555" stroke-width="1.2"/>
<text x="782.5" y="748" text-anchor="middle">0</text>
<path d="M841.0 735 V738" stroke="#555" stroke-width="1.2"/>
<text x="841.0" y="748" text-anchor="middle">100</text>
<path d="M899.6 735 V738" stroke="#555" stroke-width="1.2"/>
<text x="899.6" y="748" text-anchor="middle">200</text>
<path d="M958.1 735 V738" stroke="#555" stroke-width="1.2"/>
<text x="958.1" y="748" text-anchor="middle">300</text>
<path d="M769 693.8 H773" stroke="#999" stroke-width="1.4"/>
<text x="766.5" y="697.3" text-anchor="end">45</text>
<path d="M769 648.8 H773" stroke="#999" stroke-width="1.4"/>
<text x="766.5" y="652.3" text-anchor="end">50</text>
<path d="M769 603.8 H773" stroke="#999" stroke-width="1.4"/>
<text x="766.5" y="607.3" text-anchor="end">55</text>
<path d="M769 558.8 H773" stroke="#999" stroke-width="1.4"/>
<text x="766.5" y="562.3" text-anchor="end">60</text>
<path d="M769 513.8 H773" stroke="#999" stroke-width="1.4"/>
<text x="766.5" y="517.3" text-anchor="end">65</text>
<path d="M769 468.8 H773" stroke="#999" stroke-width="1.4"/>
<text x="766.5" y="472.3" text-anchor="end">70</text>
<path d="M769 423.8 H773" stroke="#999" stroke-width="1.4"/>
<text x="766.5" y="427.3" text-anchor="end">75</text>
<path d="M769 378.8 H773" stroke="#999" stroke-width="1.4"/>
<text x="766.5" y="382.3" text-anchor="end">80</text>
<path d="M769 333.8 H773" stroke="#999" stroke-width="1.4"/>
<text x="766.5" y="337.3" text-anchor="end">85</text>
<path d="M769 288.8 H773" stroke="#999" stroke-width="1.4"/>
<text x="766.5" y="292.3" text-anchor="end">90</text>
<path d="M769 243.8 H773" stroke="#999" stroke-width="1.4"/>
<text x="766.5" y="247.3" text-anchor="end">95</text>
<path d="M769 198.8 H773" stroke="#999" stroke-width="1.4"/>
<text x="766.5" y="202.3" text-anchor="end">100</text>
<text x="614.5" y="175" text-anchor="middle" font-size="12" letter-spacing="0" fill="#222">Cc</text>
<text x="881" y="175" text-anchor="middle" font-size="12" letter-spacing="0" fill="#222">R</text>
</svg>
<div class="a" style="left:1029px;top:115px;width:346px;height:661px;background:#eee;"></div>
<div class="a card" style="left:1033px;top:133px;width:341px;height:138px"></div>
<div class="a card" style="left:1033px;top:294px;width:341px;height:200px"></div>
<div class="a card" style="left:1033px;top:528px;width:341px;height:200px;overflow:hidden"><div class="a" style="left:0;top:71px;width:331px;height:28px;background:#333"></div><div class="a" style="left:0;top:99px;width:331px;height:61px;background:#f2f2f2"></div></div>
<span class="t" id="t30" style="left:1044px;top:126.10px;font-size:16.8px;font-weight:400;color:#222;letter-spacing:-0.302px;">Selected</span>
<span class="t" id="t31" style="left:1113.8px;top:126.10px;font-size:16.8px;font-weight:400;color:#222;letter-spacing:0.337px;">individual</span>
<div class="a" style="left:1070px;top:153px;width:10px;height:19px;background:#eee;border-radius:3px;"></div>
<span class="t" id="t32" style="left:1072.4px;top:159.30px;font-size:10.4px;font-weight:400;color:#333;letter-spacing:0;">1</span>
<div class="a" style="left:1075px;top:179px;width:258px;height:2px;background:#ddd;"></div>
<div class="a" style="left:1069px;top:174px;width:12px;height:12px;border-radius:50%;background:#ff6f33"></div>
<svg class="a" style="left:1054px;top:173px" width="10" height="12" viewBox="0 0 10 12"><path d="M8 1 L2.4 6 L8 11" fill="none" stroke="#ffb9a0" stroke-width="2"/></svg>
<svg class="a" style="left:1344px;top:173px" width="10" height="12" viewBox="0 0 10 12"><path d="M2 1 L7.6 6 L2 11" fill="none" stroke="#ff6f33" stroke-width="2"/></svg>
<div class="a" style="left:1058.5px;top:225px;width:27px;height:14px;border-radius:7px;background:#adb4be"></div>
<div class="a" style="left:1050.9px;top:222px;width:20px;height:20px;border-radius:50%;background:#fff;box-shadow:0 1px 4px rgba(0,0,0,.32)"></div>
<span class="t" id="t33" style="left:1099.5px;top:225.30px;font-size:13.2px;font-weight:400;color:#222;letter-spacing:-0.043px;">Link to data selection</span>
<span class="t" id="t34" style="left:1044px;top:283.01px;font-size:23px;font-weight:400;color:#222;letter-spacing:-0.619px;">Parameters</span>
<svg class="a" style="left:1166.5px;top:294.5px" width="9" height="5" viewBox="0 0 9 5"><path d="M0 0 H9 L4.5 5 Z" fill="#222"/></svg>
<svg class="a" style="left:1308.5px;top:286.5px" width="17" height="16.3" viewBox="0 0 25 24">
<path d="M0.1 12.5 L10.5 6.7 L12.4 7.5 C12.8 10.6 15.6 12.6 19 12.2 L21.2 13.5 L11.6 18.2 Z" fill="#fbc5ae"/>
<path d="M0 17.9 L3 16 L11.9 20.1 L21.3 15.8 L24.4 17.7 L11.9 24 Z" fill="#ff6f33"/>
<path d="M16.9 0.1 H20 V3.8 H23.7 V6.9 H20 V10.6 H16.9 V6.9 H13.2 V3.8 H16.9 Z" fill="#ff6f33"/>
</svg>
<svg class="a" style="left:1340.6px;top:286.9px" width="16.4" height="16.4" viewBox="0 0 16 16">
<path d="M5.05 2.16 A6.5 6.5 0 1 1 3.42 12.42" fill="none" stroke="#fbbba3" stroke-width="2.7"/>
<path d="M0 0.8 V6.8 H6.3 Z" fill="#ff6f33"/>
</svg>
<div class="a" style="left:1145.5px;top:328px;width:27px;height:14px;border-radius:7px;background:#adb4be"></div>
<div class="a" style="left:1137.9px;top:325px;width:20px;height:20px;border-radius:50%;background:#fff;box-shadow:0 1px 4px rgba(0,0,0,.32)"></div>
<span class="t" id="t35" style="left:1185.5px;top:328.00px;font-size:13.2px;font-weight:400;color:#222;letter-spacing:-0.207px;">Fixed parameters</span>
<span class="t" id="t36" style="left:1048.7px;top:368.00px;font-size:13.2px;font-weight:400;color:#222;letter-spacing:-0.252px;">Tlag</span>
<svg class="a" style="left:1048px;top:395px" width="201.3" height="14" viewBox="0 0 201.3 14"><rect x="0.0" y="0" width="4.0" height="14" fill="rgb(228, 224, 220)"/><rect x="0.0" y="0" width="3.0" height="14" fill="rgb(223, 218, 214)"/><rect x="4.0" y="0" width="4.0" height="14" fill="rgb(230, 219, 214)"/><rect x="4.0" y="0" width="3.0" height="14" fill="rgb(225, 211, 205)"/><rect x="8.0" y="0" width="4.0" height="14" fill="rgb(233, 215, 207)"/><rect x="8.0" y="0" width="3.0" height="14" fill="rgb(227, 205, 195)"/><rect x="12.0" y="0" width="4.0" height="14" fill="rgb(234, 211, 201)"/><rect x="12.0" y="0" width="3.0" height="14" fill="rgb(228, 199, 186)"/><rect x="16.0" y="0" width="4.0" height="14" fill="rgb(236, 208, 195)"/><rect x="16.0" y="0" width="3.0" height="14" fill="rgb(230, 193, 176)"/><rect x="20.0" y="0" width="4.0" height="14" fill="rgb(238, 205, 191)"/><rect x="20.0" y="0" width="3.0" height="14" fill="rgb(232, 187, 168)"/><rect x="24.0" y="0" width="4.0" height="14" fill="rgb(240, 203, 187)"/><rect x="24.0" y="0" width="3.0" height="14" fill="rgb(234, 181, 159)"/><rect x="28.0" y="0" width="4.0" height="14" fill="rgb(241, 201, 183)"/><rect x="28.0" y="0" width="3.0" height="14" fill="rgb(235, 176, 150)"/><rect x="32.0" y="0" width="4.0" height="14" fill="rgb(243, 199, 180)"/><rect x="32.0" y="0" width="3.0" height="14" fill="rgb(237, 170, 142)"/><rect x="36.0" y="0" width="4.0" height="14" fill="rgb(245, 198, 178)"/><rect x="36.0" y="0" width="3.0" height="14" fill="rgb(239, 165, 134)"/><rect x="40.0" y="0" width="4.0" height="14" fill="rgb(246, 197, 176)"/><rect x="40.0" y="0" width="3.0" height="14" fill="rgb(240, 160, 126)"/><rect x="44.0" y="0" width="4.0" height="14" fill="rgb(247, 196, 175)"/><rect x="44.0" y="0" width="3.0" height="14" fill="rgb(242, 155, 119)"/><rect x="48.0" y="0" width="4.0" height="14" fill="rgb(248, 196, 174)"/><rect x="48.0" y="0" width="3.0" height="14" fill="rgb(243, 151, 112)"/><rect x="52.0" y="0" width="4.0" height="14" fill="rgb(249, 196, 174)"/><rect x="52.0" y="0" width="3.0" height="14" fill="rgb(244, 146, 105)"/><rect x="56.0" y="0" width="4.0" height="14" fill="rgb(250, 196, 174)"/><rect x="56.0" y="0" width="3.0" height="14" fill="rgb(246, 142, 98)"/><rect x="60.0" y="0" width="4.0" height="14" fill="rgb(251, 197, 174)"/><rect x="60.0" y="0" width="3.0" height="14" fill="rgb(247, 138, 92)"/><rect x="64.0" y="0" width="4.0" height="14" fill="rgb(252, 198, 176)"/><rect x="64.0" y="0" width="3.0" height="14" fill="rgb(248, 134, 86)"/><rect x="68.0" y="0" width="4.0" height="14" fill="rgb(252, 199, 177)"/><rect x="68.0" y="0" width="3.0" height="14" fill="rgb(249, 130, 80)"/><rect x="72.0" y="0" width="4.0" height="14" fill="rgb(253, 200, 179)"/><rect x="72.0" y="0" width="3.0" height="14" fill="rgb(250, 126, 75)"/><rect x="76.0" y="0" width="4.0" height="14" fill="rgb(253, 202, 181)"/><rect x="76.0" y="0" width="3.0" height="14" fill="rgb(251, 123, 70)"/><rect x="80.0" y="0" width="4.0" height="14" fill="rgb(254, 204, 184)"/><rect x="80.0" y="0" width="3.0" height="14" fill="rgb(252, 120, 65)"/><rect x="84.0" y="0" width="4.0" height="14" fill="rgb(254, 207, 187)"/><rect x="84.0" y="0" width="3.0" height="14" fill="rgb(253, 117, 61)"/><rect x="88.0" y="0" width="4.0" height="14" fill="rgb(255, 209, 190)"/><rect x="88.0" y="0" width="3.0" height="14" fill="rgb(254, 115, 57)"/><rect x="92.0" y="0" width="4.0" height="14" fill="rgb(255, 212, 194)"/><rect x="92.0" y="0" width="3.0" height="14" fill="rgb(254, 113, 54)"/><rect x="96.0" y="0" width="4.0" height="14" fill="rgb(255, 215, 198)"/><rect x="96.0" y="0" width="3.0" height="14" fill="rgb(255, 112, 52)"/><rect x="100.0" y="0" width="4.0" height="14" fill="rgb(255, 217, 201)"/><rect x="100.0" y="0" width="3.0" height="14" fill="rgb(255, 111, 51)"/><rect x="104.0" y="0" width="4.0" height="14" fill="rgb(255, 214, 197)"/><rect x="104.0" y="0" width="3.0" height="14" fill="rgb(255, 112, 53)"/><rect x="108.0" y="0" width="4.0" height="14" fill="rgb(255, 211, 193)"/><rect x="108.0" y="0" width="3.0" height="14" fill="rgb(254, 114, 55)"/><rect x="112.0" y="0" width="4.0" height="14" fill="rgb(255, 208, 189)"/><rect x="112.0" y="0" width="3.0" height="14" fill="rgb(254, 116, 58)"/><rect x="116.0" y="0" width="4.0" height="14" fill="rgb(254, 206, 186)"/><rect x="116.0" y="0" width="3.0" height="14" fill="rgb(253, 118, 62)"/><rect x="120.0" y="0" width="4.0" height="14" fill="rgb(254, 204, 183)"/><rect x="120.0" y="0" width="3.0" height="14" fill="rgb(252, 121, 67)"/><rect x="124.0" y="0" width="4.0" height="14" fill="rgb(253, 202, 180)"/><rect x="124.0" y="0" width="3.0" height="14" fill="rgb(251, 124, 71)"/><rect x="128.0" y="0" width="4.0" height="14" fill="rgb(253, 200, 178)"/><rect x="128.0" y="0" width="3.0" height="14" fill="rgb(250, 128, 76)"/><rect x="132.0" y="0" width="4.0" height="14" fill="rgb(252, 199, 176)"/><rect x="132.0" y="0" width="3.0" height="14" fill="rgb(249, 131, 82)"/><rect x="136.0" y="0" width="4.0" height="14" fill="rgb(252, 198, 175)"/><rect x="136.0" y="0" width="3.0" height="14" fill="rgb(248, 135, 88)"/><rect x="140.0" y="0" width="4.0" height="14" fill="rgb(251, 197, 174)"/><rect x="140.0" y="0" width="3.0" height="14" fill="rgb(247, 139, 94)"/><rect x="144.0" y="0" width="4.0" height="14" fill="rgb(250, 196, 173)"/><rect x="144.0" y="0" width="3.0" height="14" fill="rgb(245, 143, 100)"/><rect x="148.0" y="0" width="4.0" height="14" fill="rgb(249, 196, 174)"/><rect x="148.0" y="0" width="3.0" height="14" fill="rgb(244, 148, 107)"/><rect x="152.0" y="0" width="4.0" height="14" fill="rgb(248, 196, 174)"/><rect x="152.0" y="0" width="3.0" height="14" fill="rgb(243, 152, 114)"/><rect x="156.0" y="0" width="4.0" height="14" fill="rgb(247, 196, 175)"/><rect x="156.0" y="0" width="3.0" height="14" fill="rgb(241, 157, 121)"/><rect x="160.0" y="0" width="4.0" height="14" fill="rgb(246, 197, 177)"/><rect x="160.0" y="0" width="3.0" height="14" fill="rgb(240, 162, 129)"/><rect x="164.0" y="0" width="4.0" height="14" fill="rgb(244, 198, 179)"/><rect x="164.0" y="0" width="3.0" height="14" fill="rgb(238, 167, 137)"/><rect x="168.0" y="0" width="4.0" height="14" fill="rgb(242, 199, 181)"/><rect x="168.0" y="0" width="3.0" height="14" fill="rgb(236, 172, 145)"/><rect x="172.0" y="0" width="4.0" height="14" fill="rgb(241, 202, 184)"/><rect x="172.0" y="0" width="3.0" height="14" fill="rgb(235, 178, 153)"/><rect x="176.0" y="0" width="4.0" height="14" fill="rgb(239, 203, 188)"/><rect x="176.0" y="0" width="3.0" height="14" fill="rgb(233, 183, 162)"/><rect x="180.0" y="0" width="4.0" height="14" fill="rgb(237, 206, 193)"/><rect x="180.0" y="0" width="3.0" height="14" fill="rgb(231, 189, 171)"/><rect x="184.0" y="0" width="4.0" height="14" fill="rgb(236, 209, 198)"/><rect x="184.0" y="0" width="3.0" height="14" fill="rgb(230, 195, 180)"/><rect x="188.0" y="0" width="4.0" height="14" fill="rgb(234, 212, 203)"/><rect x="188.0" y="0" width="3.0" height="14" fill="rgb(228, 201, 189)"/><rect x="192.0" y="0" width="4.0" height="14" fill="rgb(231, 216, 209)"/><rect x="192.0" y="0" width="3.0" height="14" fill="rgb(226, 207, 198)"/><rect x="196.0" y="0" width="4.0" height="14" fill="rgb(229, 220, 216)"/><rect x="196.0" y="0" width="3.0" height="14" fill="rgb(224, 213, 208)"/><rect x="200.0" y="0" width="1.3" height="14" fill="rgb(227, 225, 223)"/><rect x="200.0" y="0" width="1.3" height="14" fill="rgb(222, 220, 218)"/><rect x="91.8" y="0" width="18.4" height="14" fill="#fff"/><rect x="92.8" y="0" width="16.3" height="14" fill="#ff6f33"/></svg>
<span class="t" id="t37" style="left:1265.5px;top:395.50px;font-size:13px;font-weight:400;color:#aaa;letter-spacing:-0.453px;">3.6766</span>
<div class="a" style="left:1265px;top:417px;width:79px;height:1px;background:#ddd;"></div>
<svg class="a" style="left:1349px;top:391px" width="10" height="5" viewBox="0 0 10 5"><path d="M0 5 L5 0 L10 5 Z" fill="#8c8c8c"/></svg><svg class="a" style="left:1349px;top:407px" width="10" height="5" viewBox="0 0 10 5"><path d="M0 0 L5 5 L10 0 Z" fill="#8c8c8c"/></svg>
<span class="t" id="t38" style="left:1048.4px;top:438.00px;font-size:13.2px;font-weight:400;color:#222;letter-spacing:0;">ka</span>
<svg class="a" style="left:1048px;top:465px" width="201.3" height="14" viewBox="0 0 201.3 14"><rect x="0.0" y="0" width="4.0" height="14" fill="rgb(228, 224, 220)"/><rect x="0.0" y="0" width="3.0" height="14" fill="rgb(223, 218, 214)"/><rect x="4.0" y="0" width="4.0" height="14" fill="rgb(230, 219, 214)"/><rect x="4.0" y="0" width="3.0" height="14" fill="rgb(225, 211, 205)"/><rect x="8.0" y="0" width="4.0" height="14" fill="rgb(233, 215, 207)"/><rect x="8.0" y="0" width="3.0" height="14" fill="rgb(227, 205, 195)"/><rect x="12.0" y="0" width="4.0" height="14" fill="rgb(234, 211, 201)"/><rect x="12.0" y="0" width="3.0" height="14" fill="rgb(228, 199, 186)"/><rect x="16.0" y="0" width="4.0" height="14" fill="rgb(236, 208, 195)"/><rect x="16.0" y="0" width="3.0" height="14" fill="rgb(230, 193, 176)"/><rect x="20.0" y="0" width="4.0" height="14" fill="rgb(238, 205, 191)"/><rect x="20.0" y="0" width="3.0" height="14" fill="rgb(232, 187, 168)"/><rect x="24.0" y="0" width="4.0" height="14" fill="rgb(240, 203, 187)"/><rect x="24.0" y="0" width="3.0" height="14" fill="rgb(234, 181, 159)"/><rect x="28.0" y="0" width="4.0" height="14" fill="rgb(241, 201, 183)"/><rect x="28.0" y="0" width="3.0" height="14" fill="rgb(235, 176, 150)"/><rect x="32.0" y="0" width="4.0" height="14" fill="rgb(243, 199, 180)"/><rect x="32.0" y="0" width="3.0" height="14" fill="rgb(237, 170, 142)"/><rect x="36.0" y="0" width="4.0" height="14" fill="rgb(245, 198, 178)"/><rect x="36.0" y="0" width="3.0" height="14" fill="rgb(239, 165, 134)"/><rect x="40.0" y="0" width="4.0" height="14" fill="rgb(246, 197, 176)"/><rect x="40.0" y="0" width="3.0" height="14" fill="rgb(240, 160, 126)"/><rect x="44.0" y="0" width="4.0" height="14" fill="rgb(247, 196, 175)"/><rect x="44.0" y="0" width="3.0" height="14" fill="rgb(242, 155, 119)"/><rect x="48.0" y="0" width="4.0" height="14" fill="rgb(248, 196, 174)"/><rect x="48.0" y="0" width="3.0" height="14" fill="rgb(243, 151, 112)"/><rect x="52.0" y="0" width="4.0" height="14" fill="rgb(249, 196, 174)"/><rect x="52.0" y="0" width="3.0" height="14" fill="rgb(244, 146, 105)"/><rect x="56.0" y="0" width="4.0" height="14" fill="rgb(250, 196, 174)"/><rect x="56.0" y="0" width="3.0" height="14" fill="rgb(246, 142, 98)"/><rect x="60.0" y="0" width="4.0" height="14" fill="rgb(251, 197, 174)"/><rect x="60.0" y="0" width="3.0" height="14" fill="rgb(247, 138, 92)"/><rect x="64.0" y="0" width="4.0" height="14" fill="rgb(252, 198, 176)"/><rect x="64.0" y="0" width="3.0" height="14" fill="rgb(248, 134, 86)"/><rect x="68.0" y="0" width="4.0" height="14" fill="rgb(252, 199, 177)"/><rect x="68.0" y="0" width="3.0" height="14" fill="rgb(249, 130, 80)"/><rect x="72.0" y="0" width="4.0" height="14" fill="rgb(253, 200, 179)"/><rect x="72.0" y="0" width="3.0" height="14" fill="rgb(250, 126, 75)"/><rect x="76.0" y="0" width="4.0" height="14" fill="rgb(253, 202, 181)"/><rect x="76.0" y="0" width="3.0" height="14" fill="rgb(251, 123, 70)"/><rect x="80.0" y="0" width="4.0" height="14" fill="rgb(254, 204, 184)"/><rect x="80.0" y="0" width="3.0" height="14" fill="rgb(252, 120, 65)"/><rect x="84.0" y="0" width="4.0" height="14" fill="rgb(254, 207, 187)"/><rect x="84.0" y="0" width="3.0" height="14" fill="rgb(253, 117, 61)"/><rect x="88.0" y="0" width="4.0" height="14" fill="rgb(255, 209, 190)"/><rect x="88.0" y="0" width="3.0" height="14" fill="rgb(254, 115, 57)"/><rect x="92.0" y="0" width="4.0" height="14" fill="rgb(255, 212, 194)"/><rect x="92.0" y="0" width="3.0" height="14" fill="rgb(254, 113, 54)"/><rect x="96.0" y="0" width="4.0" height="14" fill="rgb(255, 215, 198)"/><rect x="96.0" y="0" width="3.0" height="14" fill="rgb(255, 112, 52)"/><rect x="100.0" y="0" width="4.0" height="14" fill="rgb(255, 217, 201)"/><rect x="100.0" y="0" width="3.0" height="14" fill="rgb(255, 111, 51)"/><rect x="104.0" y="0" width="4.0" height="14" fill="rgb(255, 214, 197)"/><rect x="104.0" y="0" width="3.0" height="14" fill="rgb(255, 112, 53)"/><rect x="108.0" y="0" width="4.0" height="14" fill="rgb(255, 211, 193)"/><rect x="108.0" y="0" width="3.0" height="14" fill="rgb(254, 114, 55)"/><rect x="112.0" y="0" width="4.0" height="14" fill="rgb(255, 208, 189)"/><rect x="112.0" y="0" width="3.0" height="14" fill="rgb(254, 116, 58)"/><rect x="116.0" y="0" width="4.0" height="14" fill="rgb(254, 206, 186)"/><rect x="116.0" y="0" width="3.0" height="14" fill="rgb(253, 118, 62)"/><rect x="120.0" y="0" width="4.0" height="14" fill="rgb(254, 204, 183)"/><rect x="120.0" y="0" width="3.0" height="14" fill="rgb(252, 121, 67)"/><rect x="124.0" y="0" width="4.0" height="14" fill="rgb(253, 202, 180)"/><rect x="124.0" y="0" width="3.0" height="14" fill="rgb(251, 124, 71)"/><rect x="128.0" y="0" width="4.0" height="14" fill="rgb(253, 200, 178)"/><rect x="128.0" y="0" width="3.0" height="14" fill="rgb(250, 128, 76)"/><rect x="132.0" y="0" width="4.0" height="14" fill="rgb(252, 199, 176)"/><rect x="132.0" y="0" width="3.0" height="14" fill="rgb(249, 131, 82)"/><rect x="136.0" y="0" width="4.0" height="14" fill="rgb(252, 198, 175)"/><rect x="136.0" y="0" width="3.0" height="14" fill="rgb(248, 135, 88)"/><rect x="140.0" y="0" width="4.0" height="14" fill="rgb(251, 197, 174)"/><rect x="140.0" y="0" width="3.0" height="14" fill="rgb(247, 139, 94)"/><rect x="144.0" y="0" width="4.0" height="14" fill="rgb(250, 196, 173)"/><rect x="144.0" y="0" width="3.0" height="14" fill="rgb(245, 143, 100)"/><rect x="148.0" y="0" width="4.0" height="14" fill="rgb(249, 196, 174)"/><rect x="148.0" y="0" width="3.0" height="14" fill="rgb(244, 148, 107)"/><rect x="152.0" y="0" width="4.0" height="14" fill="rgb(248, 196, 174)"/><rect x="152.0" y="0" width="3.0" height="14" fill="rgb(243, 152, 114)"/><rect x="156.0" y="0" width="4.0" height="14" fill="rgb(247, 196, 175)"/><rect x="156.0" y="0" width="3.0" height="14" fill="rgb(241, 157, 121)"/><rect x="160.0" y="0" width="4.0" height="14" fill="rgb(246, 197, 177)"/><rect x="160.0" y="0" width="3.0" height="14" fill="rgb(240, 162, 129)"/><rect x="164.0" y="0" width="4.0" height="14" fill="rgb(244, 198, 179)"/><rect x="164.0" y="0" width="3.0" height="14" fill="rgb(238, 167, 137)"/><rect x="168.0" y="0" width="4.0" height="14" fill="rgb(242, 199, 181)"/><rect x="168.0" y="0" width="3.0" height="14" fill="rgb(236, 172, 145)"/><rect x="172.0" y="0" width="4.0" height="14" fill="rgb(241, 202, 184)"/><rect x="172.0" y="0" width="3.0" height="14" fill="rgb(235, 178, 153)"/><rect x="176.0" y="0" width="4.0" height="14" fill="rgb(239, 203, 188)"/><rect x="176.0" y="0" width="3.0" height="14" fill="rgb(233, 183, 162)"/><rect x="180.0" y="0" width="4.0" height="14" fill="rgb(237, 206, 193)"/><rect x="180.0" y="0" width="3.0" height="14" fill="rgb(231, 189, 171)"/><rect x="184.0" y="0" width="4.0" height="14" fill="rgb(236, 209, 198)"/><rect x="184.0" y="0" width="3.0" height="14" fill="rgb(230, 195, 180)"/><rect x="188.0" y="0" width="4.0" height="14" fill="rgb(234, 212, 203)"/><rect x="188.0" y="0" width="3.0" height="14" fill="rgb(228, 201, 189)"/><rect x="192.0" y="0" width="4.0" height="14" fill="rgb(231, 216, 209)"/><rect x="192.0" y="0" width="3.0" height="14" fill="rgb(226, 207, 198)"/><rect x="196.0" y="0" width="4.0" height="14" fill="rgb(229, 220, 216)"/><rect x="196.0" y="0" width="3.0" height="14" fill="rgb(224, 213, 208)"/><rect x="200.0" y="0" width="1.3" height="14" fill="rgb(227, 225, 223)"/><rect x="200.0" y="0" width="1.3" height="14" fill="rgb(222, 220, 218)"/><rect x="91.8" y="0" width="18.4" height="14" fill="#fff"/><rect x="92.8" y="0" width="16.3" height="14" fill="#ff6f33"/></svg>
<span class="t" id="t39" style="left:1265.5px;top:465.50px;font-size:13px;font-weight:400;color:#aaa;letter-spacing:-0.453px;">0.1521</span>
<div class="a" style="left:1265px;top:487px;width:79px;height:1px;background:#ddd;"></div>
<svg class="a" style="left:1349px;top:461px" width="10" height="5" viewBox="0 0 10 5"><path d="M0 5 L5 0 L10 5 Z" fill="#8c8c8c"/></svg><svg class="a" style="left:1349px;top:477px" width="10" height="5" viewBox="0 0 10 5"><path d="M0 0 L5 5 L10 0 Z" fill="#8c8c8c"/></svg>
<div class="a" style="left:1365px;top:364px;width:10px;height:126px;background:#cdd2dc;"></div>
<div class="a" style="left:1365px;top:364px;width:10px;height:27px;background:#999;"></div>
<div class="a" style="left:1365px;top:554px;width:10px;height:169px;background:#cdd2dc;"></div>
<div class="a" style="left:1365px;top:554px;width:10px;height:106px;background:#999;"></div>
<span class="t" id="t40" style="left:1044px;top:517.41px;font-size:23px;font-weight:400;color:#222;letter-spacing:-0.084px;">Treatment</span>
<svg class="a" style="left:1157px;top:527.5px" width="9" height="5" viewBox="0 0 9 5"><path d="M0 0 H9 L4.5 5 Z" fill="#222"/></svg>
<svg class="a" style="left:1053px;top:569px" width="11" height="15" viewBox="0 0 11 15"><path d="M9.4 1 L2 7.5 L9.4 14" fill="none" stroke="#a0a0a0" stroke-width="1.9"/></svg>
<span class="t" id="t41" style="left:1082.7px;top:571.31px;font-size:12.8px;font-weight:700;color:#ff6f33;letter-spacing:-0.238px;">..:</span>
<span class="t" id="t42" style="left:1102.3px;top:571.31px;font-size:12.8px;font-weight:700;color:#ff6f33;letter-spacing:-0.098px;">loadDose_BID4mg</span>
<svg class="a" style="left:1269.5px;top:568px" width="18.5" height="17.5" viewBox="0 0 25 24">
<path d="M0.1 12.5 L10.5 6.7 L12.4 7.5 C12.8 10.6 15.6 12.6 19 12.2 L21.2 13.5 L11.6 18.2 Z" fill="#fbc5ae"/>
<path d="M0 17.9 L3 16 L11.9 20.1 L21.3 15.8 L24.4 17.7 L11.9 24 Z" fill="#ff6f33"/>
<path d="M16.9 0.1 H20 V3.8 H23.7 V6.9 H20 V10.6 H16.9 V6.9 H13.2 V3.8 H16.9 Z" fill="#ff6f33"/>
</svg>
<svg class="a" style="left:1301.6px;top:568.3px" width="17" height="17" viewBox="0 0 16 16">
<path d="M5.05 2.16 A6.5 6.5 0 1 1 3.42 12.42" fill="none" stroke="#fbbba3" stroke-width="2.7"/>
<path d="M0 0.8 V6.8 H6.3 Z" fill="#ff6f33"/>
</svg>
<span class="t" id="t43" style="left:1083px;top:607.20px;font-size:13.4px;font-weight:700;color:#fff;letter-spacing:-0.005px;">Time</span>
<span class="t" id="t44" style="left:1204.5px;top:607.20px;font-size:13.4px;font-weight:700;color:#fff;letter-spacing:-0.316px;">Amount</span>
<span class="t" id="t45" style="left:1038px;top:641.00px;font-size:13px;font-weight:400;color:#aaa;letter-spacing:0;">0</span>
<div class="a" style="left:1038px;top:663px;width:100px;height:1px;background:#ddd;"></div>
<svg class="a" style="left:1143px;top:637px" width="10" height="5" viewBox="0 0 10 5"><path d="M0 5 L5 0 L10 5 Z" fill="#8c8c8c"/></svg><svg class="a" style="left:1143px;top:653px" width="10" height="5" viewBox="0 0 10 5"><path d="M0 0 L5 5 L10 0 Z" fill="#8c8c8c"/></svg>
<span class="t" id="t46" style="left:1167.6px;top:641.00px;font-size:13px;font-weight:400;color:#aaa;letter-spacing:0;">4</span>
<div class="a" style="left:1168px;top:663px;width:100px;height:1px;background:#ddd;"></div>
<svg class="a" style="left:1274px;top:637px" width="10" height="5" viewBox="0 0 10 5"><path d="M0 5 L5 0 L10 5 Z" fill="#8c8c8c"/></svg><svg class="a" style="left:1274px;top:653px" width="10" height="5" viewBox="0 0 10 5"><path d="M0 0 L5 5 L10 0 Z" fill="#8c8c8c"/></svg>
<div class="a dbtn" style="left:1316px;top:631px;width:27px;height:27px"></div>
<div class="a" style="left:1325.5px;top:641px;width:8px;height:2.4px;background:#fff;"></div>
<span class="t" id="t47" style="left:1038px;top:702.00px;font-size:13px;font-weight:400;color:#aaa;letter-spacing:-0.6px;">12</span>
<svg class="a" style="left:1143px;top:698px" width="10" height="5" viewBox="0 0 10 5"><path d="M0 5 L5 0 L10 5 Z" fill="#8c8c8c"/></svg><svg class="a" style="left:1143px;top:714px" width="10" height="5" viewBox="0 0 10 5"><path d="M0 0 L5 5 L10 0 Z" fill="#8c8c8c"/></svg>
<span class="t" id="t48" style="left:1167.6px;top:702.00px;font-size:13px;font-weight:400;color:#aaa;letter-spacing:0;">4</span>
<svg class="a" style="left:1274px;top:698px" width="10" height="5" viewBox="0 0 10 5"><path d="M0 5 L5 0 L10 5 Z" fill="#8c8c8c"/></svg><svg class="a" style="left:1274px;top:714px" width="10" height="5" viewBox="0 0 10 5"><path d="M0 0 L5 5 L10 0 Z" fill="#8c8c8c"/></svg>
<div class="a dbtn" style="left:1303px;top:692px;width:53px;height:27px"><i></i></div>
<div class="a" style="left:1312.5px;top:702px;width:8px;height:2.4px;background:#fff;"></div>
<div class="a" style="left:1337.5px;top:702px;width:8.4px;height:2.4px;background:#fff;"></div>
<div class="a" style="left:1340.5px;top:699px;width:2.4px;height:8.4px;background:#fff;"></div>
<div class="a" style="left:1033px;top:738px;width:342px;height:37px;background:#cdd2dc;"></div>
<div class="a" style="left:1033px;top:738px;width:114px;height:37px;background:#999;"></div>
<span class="t" id="t49" style="left:1052px;top:750.81px;font-size:12.4px;font-weight:400;color:#fff;letter-spacing:-0.773px;">PARAMETERS</span>
<span class="t" id="t50" style="left:1175.5px;top:750.81px;font-size:12.4px;font-weight:400;color:#444;letter-spacing:-0.567px;">SETTINGS</span>
<span class="t" id="t51" style="left:1280px;top:750.81px;font-size:12.4px;font-weight:400;color:#444;letter-spacing:-0.219px;">DATA OVER...</span>
<div class="a" style="left:1374px;top:115px;width:1px;height:661px;background:#fff;"></div>
<div class="a" style="left:0px;top:0px;width:1376px;height:1px;background:#15264f;"></div>
<div class="a" style="left:0px;top:0px;width:1px;height:776px;background:#15264f;"></div>
<div class="a" style="left:1375px;top:0px;width:1px;height:776px;background:linear-gradient(#15264f 0,#15264f 40%,#333 75%,#333 100%);"></div>
<div class="a" style="left:0px;top:775px;width:1376px;height:1px;background:#2a2a2a;"></div>
</body></html>
